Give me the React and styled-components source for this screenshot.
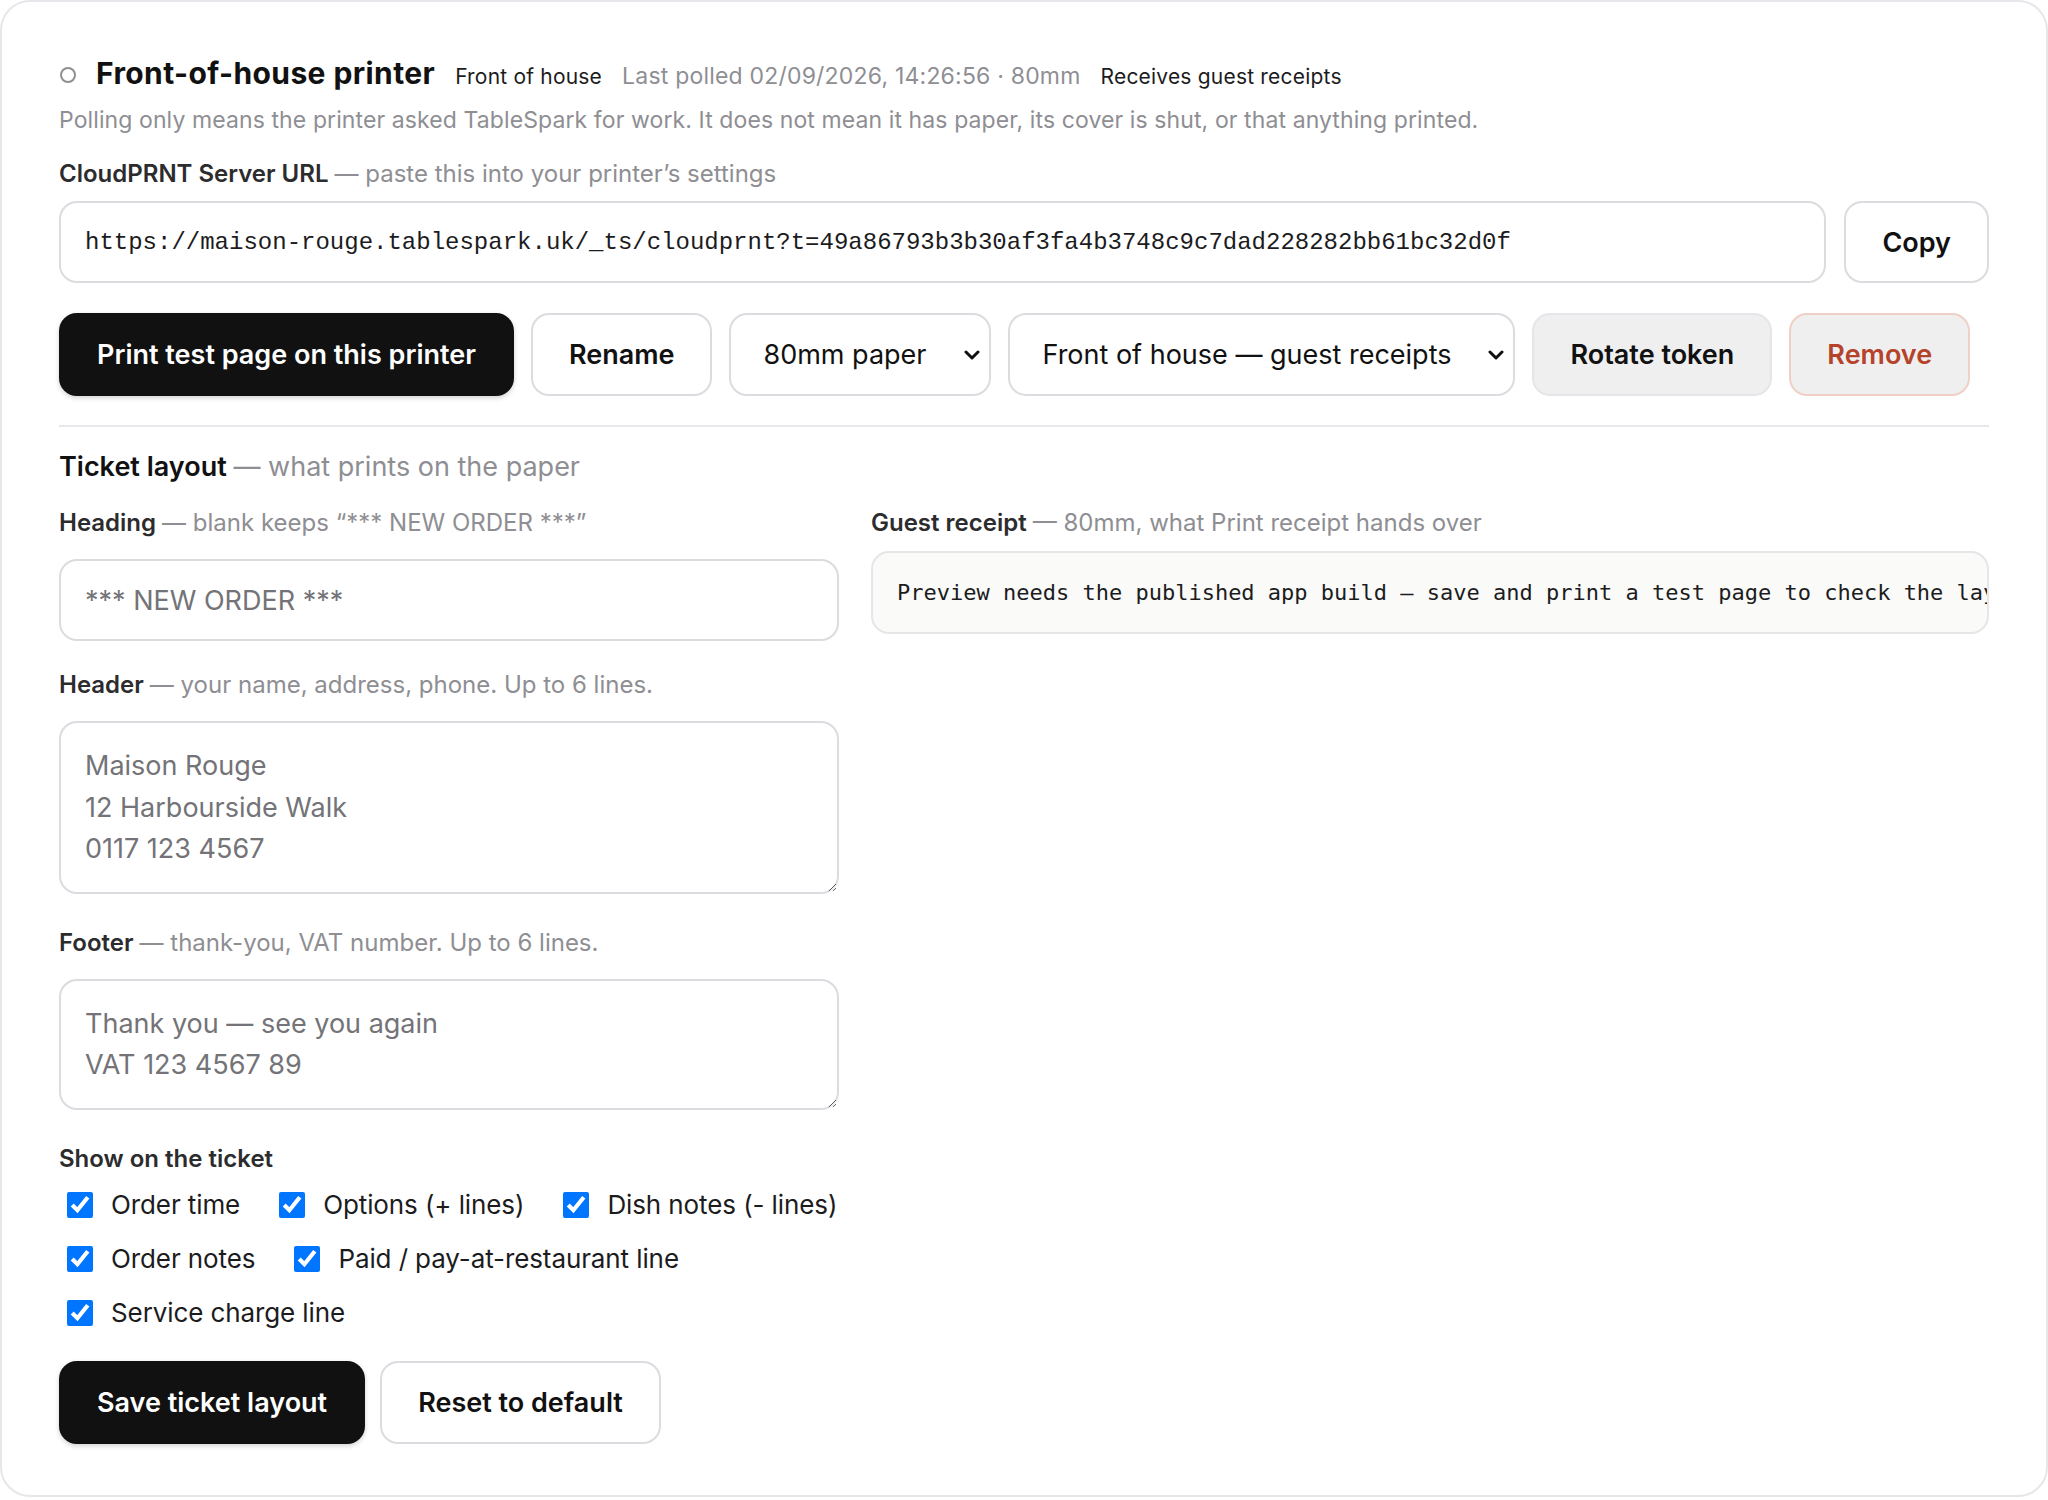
import React from 'react';
import styled, { createGlobalStyle, css } from 'styled-components';

const GlobalStyle = createGlobalStyle`
  * { box-sizing: border-box; }
  body {
    margin: 0;
    background: #fff;
    font-family: Inter, "Noto Sans", sans-serif;
    color: #1c1c1e;
  }
`;

const Card = styled.section`
  border: 2px solid #e7e7eb;
  border-radius: 30px;
  padding: 51px 57px 51px 57px;
  background: #fff;
`;

const TitleRow = styled.div`
  display: flex;
  align-items: baseline;
  gap: 20px;
  line-height: 40px;
`;

const StatusDot = styled.span`
  align-self: center;
  width: 16px;
  height: 16px;
  border: 2px solid #8e8e93;
  border-radius: 50%;
  margin-left: 1px;
`;

const Title = styled.h2`
  margin: 0;
  font-size: 30px;
  letter-spacing: 0.4px;
  font-weight: 700;
  color: #111;
`;

const Meta = styled.span`
  font-size: ${p => (p.$muted ? '23px' : '21px')};
  letter-spacing: 0.2px;
  color: ${p => (p.$muted ? '#8e8e93' : '#1c1c1e')};
`;

const Hint = styled.p`
  margin: 7px 0 0;
  font-size: 23px;
  letter-spacing: 0.1px;
  line-height: 33px;
  color: #8e8e93;
`;

const Label = styled.div`
  font-size: 24px;
  line-height: 32px;
  font-weight: 600;
  color: #2c2c2e;
  margin-top: ${p => p.$top || 0}px;

  span {
    font-weight: 400;
    color: #8e8e93;
  }
`;

const UrlRow = styled.div`
  display: flex;
  gap: 18px;
  margin-top: 11px;
`;

const fieldBox = css`
  border: 2px solid #dcdce0;
  border-radius: 18px;
  background: #fff;
  outline: none;
`;

const UrlInput = styled.input`
  ${fieldBox};
  flex: 1;
  height: 82px;
  padding: 0 24px;
  font-family: "Liberation Mono", monospace;
  font-size: 24px;
  color: #1c1c1e;
`;

const Button = styled.button`
  height: ${p => p.$h || 83}px;
  padding: 0 36px;
  border: 2px solid #dcdce0;
  border-radius: 18px;
  background: #fff;
  color: #111;
  font-family: inherit;
  font-size: 27px;
  font-weight: 600;
  white-space: nowrap;
  cursor: pointer;

  ${p => p.$variant === 'primary' && css`
    background: #111;
    border-color: #111;
    color: #fff;
    box-shadow: 0 2px 5px rgba(0, 0, 0, 0.18);
  `}
  ${p => p.$variant === 'muted' && css`
    background: #efeff0;
    border-color: #e6e6ea;
  `}
  ${p => p.$variant === 'danger' && css`
    background: #efeff0;
    border-color: #efd0c6;
    color: #b5432a;
  `}
`;

const ButtonRow = styled.div`
  display: flex;
  gap: ${p => p.$gap || 17}px;
  margin-top: ${p => p.$top || 0}px;
`;

const SelectWrap = styled.div`
  position: relative;
  display: inline-flex;
`;

const Select = styled.select`
  ${fieldBox};
  appearance: none;
  height: 83px;
  padding: 0 62px 0 32px;
  font-family: inherit;
  font-size: 27px;
  color: #111;
`;

const Chevron = styled.svg`
  position: absolute;
  right: 11px;
  top: 50%;
  transform: translateY(-50%);
  pointer-events: none;
`;

const Divider = styled.hr`
  border: none;
  height: 2px;
  background: #e8e8ec;
  margin: 29px 0 20px;
`;

const SectionTitle = styled.h3`
  margin: 0;
  font-size: 27px;
  line-height: 40px;
  font-weight: 600;
  color: #111;

  span {
    font-weight: 400;
    color: #8e8e93;
  }
`;

const Columns = styled.div`
  display: grid;
  grid-template-columns: 780px 1fr;
  gap: 32px;
  align-items: start;
  margin-top: 20px;
`;

const Column = styled.div`
  display: flex;
  flex-direction: column;
  min-width: 0;
`;

const Field = styled.div`
  display: flex;
  flex-direction: column;
  gap: ${p => p.$gap || 20}px;
  margin-bottom: 28px;
`;

const TextInput = styled.input`
  ${fieldBox};
  height: 82px;
  padding: 0 24px;
  font-family: inherit;
  font-size: 27px;

  &::placeholder { color: #737378; }
`;

const TextArea = styled.textarea`
  ${fieldBox};
  display: block;
  margin-bottom: 5px;
  padding: 22px 24px;
  font-family: inherit;
  font-size: 27px;
  line-height: 41.6px;
  resize: vertical;

  &::placeholder { color: #737378; }
`;

const Preview = styled.div`
  height: 83px;
  display: flex;
  align-items: center;
  padding: 0 24px;
  border: 2px solid #e6e6e9;
  border-radius: 18px;
  background: #fafaf9;
  overflow: hidden;
  white-space: nowrap;
  font-family: "DejaVu Sans Mono", monospace;
  font-size: 22px;
  color: #1c1c1e;
`;

const CheckGrid = styled.div`
  display: flex;
  flex-wrap: wrap;
  column-gap: 31px;
  row-gap: 14px;
  margin-top: 10px;
`;

const CheckItem = styled.label`
  display: inline-flex;
  align-items: center;
  gap: 18px;
  height: 40px;
  font-size: 26px;
  letter-spacing: -0.1px;
  color: #1c1c1e;
  white-space: nowrap;

  input {
    width: 26px;
    height: 26px;
    margin: 0 0 0 8px;
    accent-color: #0075ff;
  }
`;

const checks = [
  'Order time',
  'Options (+ lines)',
  'Dish notes (- lines)',
  'Order notes',
  'Paid / pay-at-restaurant line',
  'Service charge line',
];

function ChevronIcon() {
  return (
    <Chevron width="16" height="10" viewBox="0 0 16 10">
      <path d="M2 2l6 6 6-6" fill="none" stroke="#111" strokeWidth="3" strokeLinecap="round" strokeLinejoin="round" />
    </Chevron>
  );
}

export default function App() {
  return (
    <>
      <GlobalStyle />
      <Card>
        <TitleRow>
          <StatusDot />
          <Title>Front-of-house printer</Title>
          <Meta>Front of house</Meta>
          <Meta $muted>Last polled 02/09/2026, 14:26:56 · 80mm</Meta>
          <Meta>Receives guest receipts</Meta>
        </TitleRow>
        <Hint>
          Polling only means the printer asked TableSpark for work. It does not mean it has paper, its cover is shut, or that anything printed.
        </Hint>

        <Label $top={21}>
          CloudPRNT Server URL <span>— paste this into your printer’s settings</span>
        </Label>
        <UrlRow>
          <UrlInput readOnly value="https://maison-rouge.tablespark.uk/_ts/cloudprnt?t=49a86793b3b30af3fa4b3748c9c7dad228282bb61bc32d0f" />
          <Button $h={82}>Copy</Button>
        </UrlRow>

        <ButtonRow $top={30}>
          <Button $variant="primary">Print test page on this printer</Button>
          <Button>Rename</Button>
          <SelectWrap>
            <Select defaultValue="80">
              <option value="80">80mm paper</option>
              <option value="58">58mm paper</option>
            </Select>
            <ChevronIcon />
          </SelectWrap>
          <SelectWrap>
            <Select defaultValue="foh">
              <option value="foh">Front of house — guest receipts</option>
              <option value="kitchen">Kitchen — order tickets</option>
            </Select>
            <ChevronIcon />
          </SelectWrap>
          <Button $variant="muted">Rotate token</Button>
          <Button $variant="danger">Remove</Button>
        </ButtonRow>

        <Divider />

        <SectionTitle>
          Ticket layout <span>— what prints on the paper</span>
        </SectionTitle>

        <Columns>
          <Column>
            <Field>
              <Label>Heading <span>— blank keeps “*** NEW ORDER ***”</span></Label>
              <TextInput placeholder="*** NEW ORDER ***" />
            </Field>
            <Field>
              <Label>Header <span>— your name, address, phone. Up to 6 lines.</span></Label>
              <TextArea rows={3} placeholder={'Maison Rouge\n12 Harbourside Walk\n0117 123 4567'} />
            </Field>
            <Field>
              <Label>Footer <span>— thank-you, VAT number. Up to 6 lines.</span></Label>
              <TextArea rows={2} placeholder={'Thank you — see you again\nVAT 123 4567 89'} />
            </Field>

            <Label>Show on the ticket</Label>
            <CheckGrid>
              {checks.map(c => (
                <CheckItem key={c}>
                  <input type="checkbox" defaultChecked />
                  {c}
                </CheckItem>
              ))}
            </CheckGrid>

            <ButtonRow $top={28} $gap={15}>
              <Button $variant="primary">Save ticket layout</Button>
              <Button>Reset to default</Button>
            </ButtonRow>
          </Column>

          <Column>
            <Field $gap={12}>
              <Label>Guest receipt <span>— 80mm, what Print receipt hands over</span></Label>
              <Preview>
                Preview needs the published app build – save and print a test page to check the layout.
              </Preview>
            </Field>
          </Column>
        </Columns>
      </Card>
    </>
  );
}
